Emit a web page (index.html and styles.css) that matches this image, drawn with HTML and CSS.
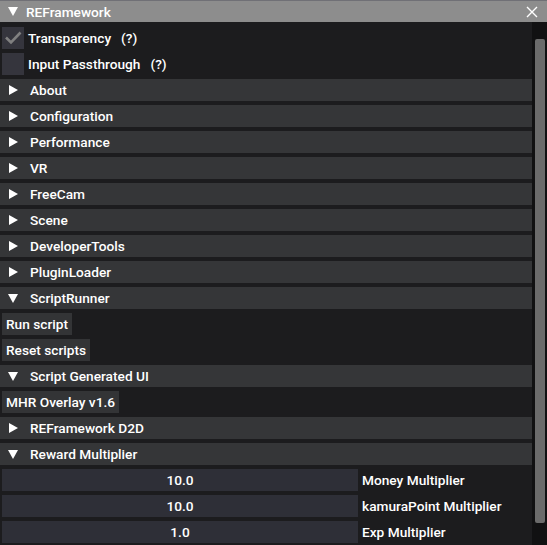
FILE: index.html
```html
<!DOCTYPE html>
<html lang="en">
  <head>
    <meta charset="UTF-8" />
    <title>REFramework</title>
    <link rel="stylesheet" href="styles.css">
  </head>
  <body>
    <div class="window">
      <div class="titlebar">
        <span class="arrow down"></span>
        <span class="title">REFramework</span>
        <svg class="close" width="12" height="12" viewBox="0 0 12 12">
          <path d="M1 1 L11 11 M11 1 L1 11" stroke="#fff" stroke-width="1.4" fill="none" />
        </svg>
      </div>
      <div class="body">
        <div class="content">
          <div class="row check-row">
            <span class="checkbox">
              <svg width="22" height="22" viewBox="0 0 22 22">
                <path d="M4 10.5 L9 15.5 L18.5 5.5" stroke="#808080" stroke-width="2.6" fill="none" />
              </svg>
            </span>
            <span class="label">Transparency</span>
            <span class="help">(?)</span>
          </div>
          <div class="row check-row">
            <span class="checkbox"></span>
            <span class="label">Input Passthrough</span>
            <span class="help">(?)</span>
          </div>

          <div class="header"><span class="arrow right"></span>About</div>
          <div class="header"><span class="arrow right"></span>Configuration</div>
          <div class="header"><span class="arrow right"></span>Performance</div>
          <div class="header"><span class="arrow right"></span>VR</div>
          <div class="header"><span class="arrow right"></span>FreeCam</div>
          <div class="header"><span class="arrow right"></span>Scene</div>
          <div class="header"><span class="arrow right"></span>DeveloperTools</div>
          <div class="header"><span class="arrow right"></span>PluginLoader</div>
          <div class="header"><span class="arrow down"></span>ScriptRunner</div>

          <div class="row"><span class="button">Run script</span></div>
          <div class="row"><span class="button">Reset scripts</span></div>

          <div class="header"><span class="arrow down"></span>Script Generated UI</div>
          <div class="row"><span class="button">MHR Overlay v1.6</span></div>
          <div class="header"><span class="arrow right"></span>REFramework D2D</div>
          <div class="header"><span class="arrow down"></span>Reward Multiplier</div>

          <div class="row slider-row">
            <span class="slider">10.0</span>
            <span class="label">Money Multiplier</span>
          </div>
          <div class="row slider-row">
            <span class="slider">10.0</span>
            <span class="label">kamuraPoint Multiplier</span>
          </div>
          <div class="row slider-row">
            <span class="slider">1.0</span>
            <span class="label">Exp Multiplier</span>
          </div>
        </div>
        <div class="scrollbar">
          <div class="grab"></div>
        </div>
      </div>
    </div>
  </body>
</html>
```

FILE: styles.css
```css
* {
  box-sizing: border-box;
}

body {
  margin: 0;
  background-color: #1c1c1e;
  font-family: Roboto, "Noto Sans", sans-serif;
  font-size: 13.7px;
  font-weight: 500;
  color: #ffffff;
}

.window {
  width: 547px;
  height: 545px;
  display: flex;
  flex-direction: column;
  overflow: hidden;
}

.titlebar {
  height: 22px;
  flex-shrink: 0;
  display: flex;
  align-items: center;
  padding-left: 8px;
  background-color: #8d8d8d;
  border-top: 1px solid #707076;
}

.titlebar .arrow.down {
  margin-left: 0;
  margin-right: 8px;
}

.close {
  margin-left: auto;
  margin-right: 9px;
}

.body {
  flex: 1;
  display: flex;
  min-height: 0;
}

.content {
  flex: 1;
  display: flex;
  flex-direction: column;
  gap: 4px;
  padding-top: 5px;
  overflow: hidden;
}

.row {
  height: 22px;
  flex-shrink: 0;
  display: flex;
  align-items: center;
  padding-left: 2px;
}

.checkbox {
  width: 22px;
  height: 22px;
  background-color: #35353d;
  display: flex;
}

.check-row .label {
  margin-left: 4px;
}

.help {
  margin-left: 10px;
}

.header {
  height: 22px;
  flex-shrink: 0;
  display: flex;
  align-items: center;
  padding-left: 9px;
  background-color: #353638;
}

.arrow {
  width: 0;
  height: 0;
  margin-right: 11px;
}

.arrow.right {
  border-top: 5px solid transparent;
  border-bottom: 5px solid transparent;
  border-left: 9px solid #ffffff;
  margin-right: 12px;
}

.arrow.down {
  border-left: 5.5px solid transparent;
  border-right: 5.5px solid transparent;
  border-top: 9px solid #ffffff;
  margin-left: -1px;
  margin-right: 12px;
}

.button {
  height: 22px;
  display: flex;
  align-items: center;
  padding: 0 4px;
  background-color: #333436;
}

.slider {
  width: 356px;
  height: 22px;
  display: flex;
  align-items: center;
  justify-content: center;
  background-color: #2e2f37;
}

.slider-row .label {
  margin-left: 4px;
}

.scrollbar {
  width: 15px;
  flex-shrink: 0;
  background-color: #111112;
  padding: 17px 2px 22px 3px;
}

.grab {
  height: 100%;
  background-color: #6b6b6b;
  border-radius: 2px;
}
```
